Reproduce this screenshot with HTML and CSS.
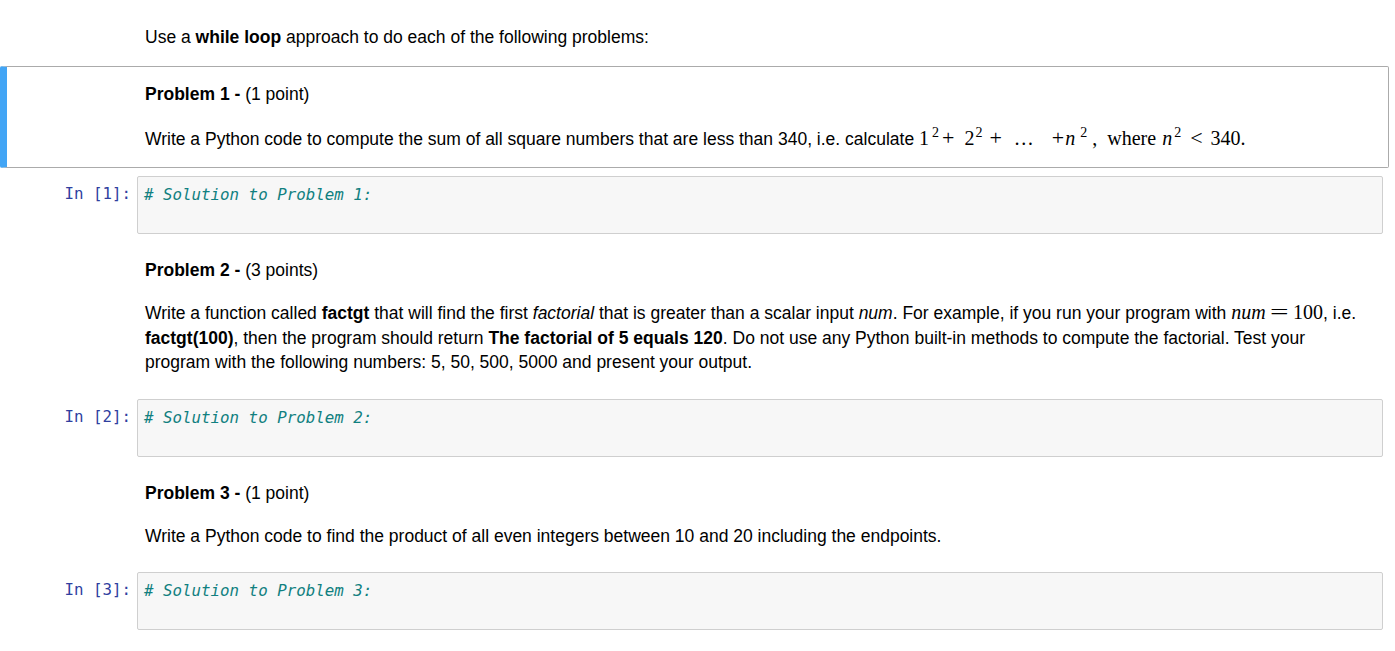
FILE: index.html
```html
<!DOCTYPE html>
<html>
<head>
<meta charset="utf-8">
<link rel="stylesheet" href="styles.css">
</head>
<body>
<div class="notebook">
  <div class="cell md intro">
    <div class="render">
      <p>Use a <b>while loop</b> approach to do each of the following problems:</p>
    </div>
  </div>
  <div class="cell md selected">
    <div class="render">
      <p><b>Problem 1 -</b> (1 point)</p>
      <p>Write a Python code to compute the sum of all square numbers that are less than 340, i.e. calculate <span class="math"><span>1</span><sup class="m3">2</sup><span class="op m3">+</span><span class="m10">2</span><sup class="m1">2</sup><span class="op m7">+</span><span class="dots m12">…</span><span class="op m18">+</span><i class="m1">n</i><sup class="m5">2</sup><span class="m5">,</span><span class="m10">where</span><i class="m6">n</i><sup class="m2">2</sup><span class="op m9">&lt;</span><span class="m8">340.</span></span></p>
    </div>
  </div>
  <div class="cell code">
    <div class="prompt">In&nbsp;[1]:</div>
    <div class="input"><span class="comment"># Solution to Problem 1:</span></div>
  </div>
  <div class="cell md">
    <div class="render">
      <p><b>Problem 2 -</b> (3 points)</p>
      <p>Write a function called <b>factgt</b> that will find the first <i>factorial</i> that is greater than a scalar input <i>num</i>. For example, if you run your program with <span class="math"><i>num</i><span class="eq">=</span><span class="m8">100</span></span>, i.e. <b>factgt(100)</b>, then the program should return <b>The factorial of 5 equals 120</b>. Do not use any Python built-in methods to compute the factorial. Test your program with the following numbers: 5, 50, 500, 5000 and present your output.</p>
    </div>
  </div>
  <div class="cell code">
    <div class="prompt">In&nbsp;[2]:</div>
    <div class="input"><span class="comment"># Solution to Problem 2:</span></div>
  </div>
  <div class="cell md">
    <div class="render">
      <p><b>Problem 3 -</b> (1 point)</p>
      <p>Write a Python code to find the product of all even integers between 10 and 20 including the endpoints.</p>
    </div>
  </div>
  <div class="cell code">
    <div class="prompt">In&nbsp;[3]:</div>
    <div class="input"><span class="comment"># Solution to Problem 3:</span></div>
  </div>
</div>
</body>
</html>
```
FILE: styles.css
```css
html, body {
  margin: 0;
  padding: 0;
  background: #fff;
}
body {
  font-family: "Liberation Sans", Arial, sans-serif;
  font-size: 17.5px;
  color: #000;
}
.notebook {
  width: 1389px;
  padding-top: 10px;
}
.cell {
  border: 1px solid transparent;
  border-radius: 2px;
  padding: 5px;
  display: flex;
}
.cell.md {
  padding-left: 1px;
  border-left-width: 7px;
}
.cell.selected {
  border-color: #ababab;
  border-left-color: #42a5f5;
}
.render {
  padding: 8px 24px 10px 137px;
  line-height: 24.5px;
  flex: 1;
}
.intro .render {
  padding-top: 9px;
  padding-bottom: 10px;
}
.selected .render {
  padding-top: 10px;
  padding-bottom: 11px;
}
.render p {
  margin: 0;
}
.render p + p {
  margin-top: 18.5px;
}
.selected .render p + p {
  margin-top: 20.5px;
}
.math {
  font-family: "Liberation Serif", "Times New Roman", serif;
  font-size: 20px;
  line-height: 1;
}
.math sup {
  font-size: 14px;
  vertical-align: 8px;
  line-height: 0;
}
.math .op {
  font-size: 22px;
}
.math .eq {
  display: inline-block;
  font-size: 22px;
  transform: scaleX(1.5);
  margin-left: 7px;
}
.m1 { margin-left: 1px; }
.m2 { margin-left: 2px; }
.m3 { margin-left: 3px; }
.m5 { margin-left: 5px; }
.m6 { margin-left: 6px; }
.m7 { margin-left: 7px; }
.m8 { margin-left: 8px; }
.m9 { margin-left: 9px; }
.m10 { margin-left: 10px; }
.m12 { margin-left: 12px; }
.m18 { margin-left: 18px; }
.code {
  padding-top: 7px;
  padding-bottom: 9px;
  padding-left: 1px;
}
.prompt {
  width: 135px;
  flex: none;
  text-align: right;
  font-family: "DejaVu Sans Mono", monospace;
  font-size: 15.8px;
  color: #303f9f;
  padding-top: 9px;
  padding-right: 6px;
  line-height: 18px;
  box-sizing: border-box;
}
.input {
  flex: 1;
  background: #f7f7f7;
  border: 1px solid #cfcfcf;
  border-radius: 2px;
  padding: 9px 6px;
  box-sizing: border-box;
  height: 58px;
  font-family: "DejaVu Sans Mono", monospace;
  font-size: 15.8px;
  line-height: 18px;
}
.comment {
  color: #108080;
  font-style: italic;
}
```
